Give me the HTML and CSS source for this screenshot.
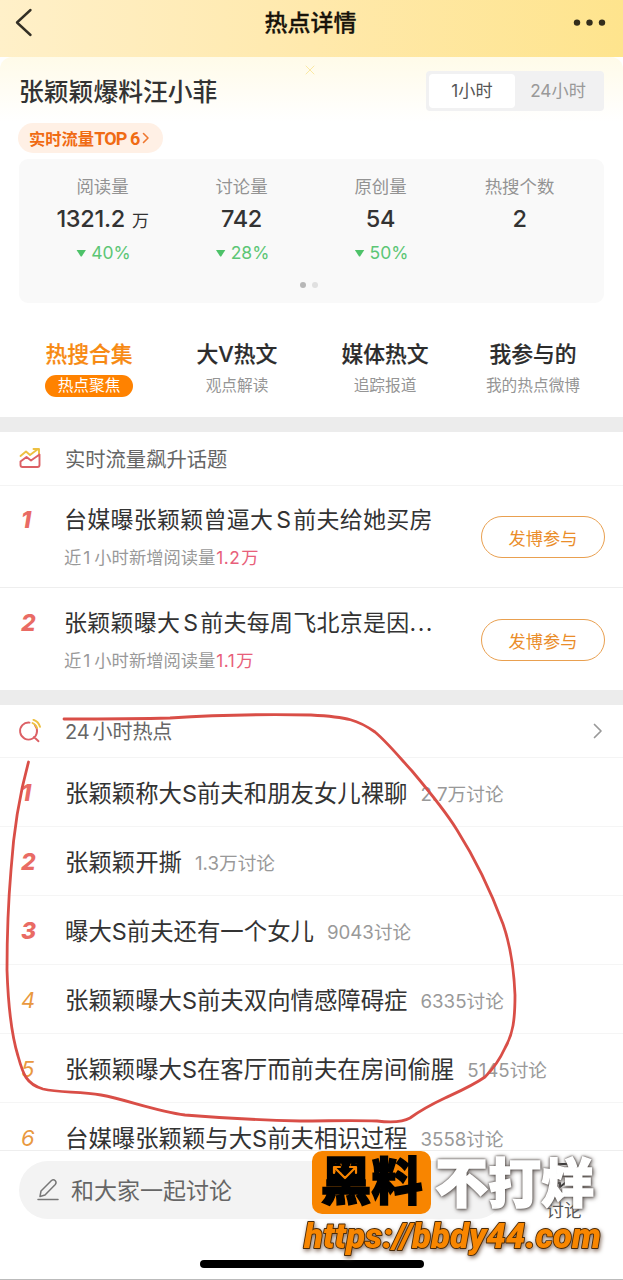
FILE: index.html
```html
<!DOCTYPE html>
<html lang="zh-CN">
<head>
<meta charset="utf-8">
<title>热点详情</title>
<link rel="stylesheet" href="styles.css">
</head>
<body>
<div class="screen">
  <header class="navbar">
    <svg class="back" width="20" height="30" viewBox="0 0 20 30"><path d="M16.500 2 3 14.500 16.500 27"/></svg>
    <h1 class="nav-title">热点详情</h1>
    <svg class="more" width="34" height="8" viewBox="0 0 34 8"><circle cx="4" cy="3.600" r="3.200"/><circle cx="16.500" cy="3.600" r="3.200"/><circle cx="29" cy="3.600" r="3.200"/></svg>
  </header>

  <section class="topic">
    <svg class="spark" width="12" height="12" viewBox="0 0 12 12"><path d="M2 2l8 8M10 2l-8 8"/></svg>
    <div class="topic-head">
      <h2 class="topic-title">张颖颖爆料汪小菲</h2>
      <div class="segment"><span class="seg seg-on">1小时</span><span class="seg">24小时</span></div>
    </div>
    <div class="rank-pill"><span>实时流量<span class="rank-num">TOP 6</span></span><svg width="8" height="12" viewBox="0 0 8 12"><path d="M1.500 1.500 6 6 1.500 10.500"/></svg></div>
    <div class="stats">
      <div class="stat-grid">
        <div class="stat"><span class="stat-label">阅读量</span><span class="stat-value">1321.2 <small>万</small></span><span class="stat-trend"><i class="tri"></i>40%</span></div>
        <div class="stat"><span class="stat-label">讨论量</span><span class="stat-value">742</span><span class="stat-trend"><i class="tri"></i>28%</span></div>
        <div class="stat"><span class="stat-label">原创量</span><span class="stat-value">54</span><span class="stat-trend"><i class="tri"></i>50%</span></div>
        <div class="stat"><span class="stat-label">热搜个数</span><span class="stat-value">2</span></div>
      </div>
      <div class="dots"><i class="dot dot-on"></i><i class="dot"></i></div>
    </div>
  </section>

  <nav class="tabs">
    <div class="tab tab-on"><span class="tab-name">热搜合集</span><span class="tab-sub">热点聚焦</span></div>
    <div class="tab"><span class="tab-name">大V热文</span><span class="tab-sub">观点解读</span></div>
    <div class="tab"><span class="tab-name">媒体热文</span><span class="tab-sub">追踪报道</span></div>
    <div class="tab"><span class="tab-name">我参与的</span><span class="tab-sub">我的热点微博</span></div>
  </nav>

  <section class="block">
    <div class="block-head">
      <svg class="head-icon" width="24" height="24" viewBox="0 0 24 24"><path class="gold" d="M2.500 9 8 4.500l4 3.500 8-6M15.500 2H21v5"/><path class="rose" d="M2.500 14.500 8.500 10l4.500 3.500L21.500 7.500V18q0 2-2 2H4.500q-2 0-2-2z"/></svg>
      <span class="head-text">实时流量飙升话题</span>
    </div>
    <div class="rise">
      <span class="no no-top">1</span>
      <div class="rise-body"><p class="rise-title">台媒曝张颖颖曾逼大<span class="latin">S</span>前夫给她买房</p><p class="rise-note">近<span class="one">1</span>小时新增阅读量<em>1.2<b>万</b></em></p></div>
      <span class="join">发博参与</span>
    </div>
    <div class="rise">
      <span class="no no-top">2</span>
      <div class="rise-body"><p class="rise-title">张颖颖曝大<span class="latin">S</span>前夫每周飞北京是因<span class="ellipsis">...</span></p><p class="rise-note">近<span class="one">1</span>小时新增阅读量<em>1.1<b>万</b></em></p></div>
      <span class="join">发博参与</span>
    </div>
  </section>

  <section class="block hot">
    <div class="block-head">
      <svg class="head-icon" width="24" height="24" viewBox="0 0 24 24"><path class="rose" d="M11.500 3.600A8.500 8.500 0 1 0 17 6.500Q20 10 18.500 14.500M16 18l4.500 4.200"/><path class="gold" d="M14.500 4q3.500 1.500 4.500 5M15.500.8q5 1.700 6.500 7"/></svg>
      <span class="hours head-text">24<span>小时热点</span></span>
      <svg class="chevron" width="10" height="16" viewBox="0 0 10 16"><path d="M1.500 1.500 8 8l-6.500 6.500"/></svg>
    </div>
    <div class="hot-row"><span class="no no-top">1</span><span class="hot-title">张颖颖称大S前夫和朋友女儿裸聊</span><span class="hot-count">2.7万讨论</span></div>
    <div class="hot-row"><span class="no no-top">2</span><span class="hot-title">张颖颖开撕</span><span class="hot-count">1.3万讨论</span></div>
    <div class="hot-row"><span class="no no-top">3</span><span class="hot-title">曝大S前夫还有一个女儿</span><span class="hot-count">9043讨论</span></div>
    <div class="hot-row"><span class="no">4</span><span class="hot-title">张颖颖曝大S前夫双向情感障碍症</span><span class="hot-count">6335讨论</span></div>
    <div class="hot-row"><span class="no">5</span><span class="hot-title">张颖颖曝大S在客厅而前夫在房间偷腥</span><span class="hot-count">5145讨论</span></div>
    <div class="hot-row hot-last"><span class="no">6</span><span class="hot-title">台媒曝张颖颖与大S前夫相识过程</span><span class="hot-count">3558讨论</span></div>
  </section>

  <footer class="compose">
    <div class="compose-row">
      <div class="field"><svg width="22" height="24" viewBox="0 0 22 24"><path d="M3 18.500 4 13 14.500 2.500q2-1.500 3.800.3 1.500 1.800 0 3.700L8 17zM1 21.500h20"/></svg><span>和大家一起讨论</span></div>
      <div class="talk"><svg width="28" height="28" viewBox="0 0 28 28"><path d="M3 3h22v19H15l-5 4v-4H3zM8 9h12M8 15h12"/></svg><span>讨论</span></div>
    </div>
    <div class="home-bar"></div>
  </footer>

  <svg class="scribble" width="623" height="1280" viewBox="0 0 623 1280"><path d="M64 719C110 719 135 719 170 718C215 715 260 714 311 715C348 717 358 720 375 732C388 743 400 758 412 771C428 790 446 812 457 830C476 860 490 889 503 924C510 944 514 970 515 995C515 1020 513 1034 505 1048C500 1059 494 1068 485 1077C472 1086 458 1092 445 1098C428 1106 421 1110 410 1118C403 1122 390 1122.500 377 1121C350 1120 330 1121 300 1121C260 1120 220 1118 185 1115C155 1111 128 1100 101 1095C80 1091 60 1093 43 1089C26 1084 23 1074 18 1056C10 1030 8 1000 7 970C7 935 8 905 11 870C13 840 18 800 28.500 762"/></svg>

  <div class="stamp">
    <div class="stamp-top">
      <span class="stamp-box">黑料</span>
      <span class="stamp-white">不打烊</span>
      <svg class="stamp-arrows" width="28" height="18" viewBox="0 0 28 18"><path d="M4 4 14 14 24 4M3 9V3h6M19 3h6v6"/></svg>
    </div>
    <svg class="stamp-url" width="320" height="46" viewBox="0 0 320 46"><text x="14" y="34" textLength="297" lengthAdjust="spacingAndGlyphs">https://bbdy44.com</text></svg>
  </div>
</div>
</body>
</html>
```
FILE: styles.css
```css
* { box-sizing: border-box; }
body {
  margin: 0;
  background: #fff;
  color: #333;
  font-family: "Inter", "Noto Sans CJK SC", sans-serif;
}
h1, h2, p { margin: 0; font-weight: 400; }
em, i, b { font-style: normal; font-weight: 400; }
svg { display: block; flex: none; fill: none; stroke-linecap: round; stroke-linejoin: round; }
.screen {
  position: relative;
  display: flex;
  flex-direction: column;
  width: 623px;
  height: 1280px;
  overflow: hidden;
  white-space: nowrap;
}

.navbar {
  display: grid;
  grid-template-columns: 1fr auto 1fr;
  align-items: center;
  height: 57px;
  flex: none;
  padding: 0 16px 11px 14px;
  background: linear-gradient(90deg, #fff0c9, #ffe9ac 50%, #fee48d);
}
.back { stroke: #332f25; stroke-width: 2.400; }
.nav-title { font-size: 23px; font-weight: 500; line-height: 30px; color: #17130a; -webkit-text-stroke: .3px #17130a; }
.more { justify-self: end; fill: #332d1c; }

.topic {
  position: relative;
  height: 246px;
  flex: none;
  padding: 13px 19px 0;
  border-radius: 12px 12px 0 0;
  background: linear-gradient(180deg, #fffbe9, #fff 65px);
}
.spark { position: absolute; left: 304px; top: 7px; stroke: #fae9a4; stroke-width: 1; }
.topic-head { display: flex; justify-content: space-between; height: 53px; }
.topic-title { font-size: 24.800px; line-height: 44px; font-weight: 500; }
.segment {
  display: flex;
  width: 178px;
  height: 40px;
  margin-top: 1px;
  padding: 3px;
  border-radius: 4px;
  background: #f1f1f2;
}
.seg { width: 86px; line-height: 34px; text-align: center; font-size: 17.200px; color: #999; }
.seg-on { border-radius: 4px; background: #fff; color: #555; }
.rank-pill {
  display: flex;
  align-items: center;
  gap: 3px;
  width: 145px;
  height: 30px;
  margin-left: -1px;
  padding-left: 11px;
  border-radius: 15px;
  background: #fff0e5;
  color: #f06b13;
  font-size: 16.300px;
  font-weight: 700;
}
.rank-num { font-family: Roboto, sans-serif; font-size: 18px; letter-spacing: -.9px; }
.rank-pill svg { stroke: #ef7830; stroke-width: 1.600; }
.stats {
  height: 144px;
  margin-top: 6px;
  padding: 16px 15px 0 14px;
  border-radius: 9px;
  background: #f9f9f9;
}
.stat-grid { display: grid; grid-template-columns: repeat(4, 1fr); height: 107px; }
.stat { display: flex; flex-direction: column; align-items: center; }
.stat-label { font-size: 17.400px; line-height: 24px; color: #939393; }
.stat-value { height: 41px; font-size: 23.500px; font-weight: 500; line-height: 40px; letter-spacing: -.3px; }
.stat-value small { margin-left: 1px; font-size: 17px; font-weight: 400; line-height: 20px; }
.stat-trend { display: flex; align-items: center; gap: 5px; margin-left: 2px; font-size: 17.500px; line-height: 26px; color: #5cc675; }
.tri { width: 10px; height: 7px; background: #4dc269; clip-path: polygon(0 0, 100% 0, 55% 100%, 45% 100%); }
.dots { display: flex; justify-content: center; gap: 6px; margin-left: -5px; }
.dot { width: 6px; height: 6px; border-radius: 50%; background: #e0e0e0; }
.dot-on { background: #b7b7b7; }

.tabs {
  display: grid;
  grid-template-columns: repeat(4, 148px);
  height: 114px;
  flex: none;
  padding: 35px 0 0 15px;
}
.tab { display: flex; flex-direction: column; align-items: center; }
.tab-name { font-size: 21.800px; line-height: 32px; font-weight: 500; color: #2c2c2c; -webkit-text-stroke: .2px currentColor; }
.tab-sub { margin-top: 5px; font-size: 15.700px; line-height: 22px; color: #959595; }
.tab-on .tab-name { color: #f78a13; }
.tab-on .tab-sub { width: 88px; border-radius: 11px; background: #ff8200; color: #fff; text-align: center; }

.block { flex: none; border-top: 15px solid #ececec; }
.block-head {
  display: flex;
  align-items: center;
  height: 54px;
  padding: 0 20px 0 18px;
  border-bottom: 1px solid #f4f4f4;
  font-size: 20.300px;
  color: #666;
}
.head-text { margin-bottom: 2px; }
.head-icon { margin-right: 23px; stroke-width: 1.900; }
.gold { stroke: #edc042; }
.rose { stroke: #dc6065; }
.hours { flex: 1; margin-bottom: 1px; font-size: 20px; letter-spacing: -.1px; }
.hours span { margin-left: 3px; }
.chevron { stroke: #999; stroke-width: 1.700; }
.no {
  flex: none;
  width: 43px;
  font-size: 22px;
  font-style: italic;
  line-height: 30px;
  color: #e9993f;
}
.no-top { font-weight: 800; color: #e96b64; font-size: 23px; }
.rise {
  display: flex;
  height: 102px;
  padding: 19px 18px 0 21px;
  border-bottom: 1px solid #eee;
}
.rise:last-child { height: 102px; padding-top: 20px; border-bottom: 0; }
.rise-body { flex: 1; }
.rise-title { font-size: 23px; line-height: 30px; letter-spacing: .25px; }
.latin { margin: 0 2px 0 3px; }
.ellipsis { letter-spacing: 1.500px; }
.rise-note { margin-top: 11px; font-size: 17.300px; line-height: 24px; color: #999; }
.one { margin: 0 4px 0 2px; }
.rise-note em { margin-left: 1px; color: #e8607a; letter-spacing: .5px; }
.rise-note b { margin-left: 1px; }
.join {
  width: 124px;
  height: 42px;
  margin-top: 11px;
  border: 1.500px solid #e9a050;
  border-radius: 21px;
  color: #ea8d2a;
  font-size: 17.200px;
  line-height: 43px;
  text-align: center;
}

.hot { border-top-width: 15px; height: 460px; }
.hot .block-head { height: 53px; }
.hot-row {
  display: flex;
  align-items: center;
  height: 69px;
  padding: 0 0 1px 21px;
  border-bottom: 1px solid #f5f5f5;
}
.hot-last { border-bottom: 0; }
.hot-row .no { margin-top: 2px; width: 44px; }
.hot-title { font-size: 23.400px; }
.hot-count { margin: 1px 0 0 13px; font-size: 18.700px; color: #999; }

.compose {
  position: relative;
  display: flex;
  flex-direction: column;
  flex: none;
  height: 130px;
  padding: 10px 19px 0;
  border-top: 1px solid #eee;
  border-bottom: 1px solid #bbb;
  background: #fff;
}
.compose-row { display: flex; height: 99px; }
.field {
  display: flex;
  align-items: center;
  gap: 12px;
  width: 486px;
  flex: none;
  height: 58px;
  padding-left: 18px;
  border-radius: 29px;
  background: #f3f3f3;
  color: #666;
  font-size: 23px;
}
.field span { margin-bottom: 2px; }
.field svg { stroke: #777; stroke-width: 1.500; }
.talk {
  display: flex;
  flex-direction: column;
  align-items: center;
  flex: none;
  width: 118px;
  font-size: 18px;
  line-height: 24px;
  color: #555;
}
.talk svg { stroke: #333; stroke-width: 2; margin: 0 0 10px; }
.home-bar { width: 224px; height: 8px; margin-left: 181px; border-radius: 4px; background: #000; flex: none; }

.scribble { position: absolute; inset: 0; stroke: #d94e47; stroke-width: 2.800; }

.stamp { position: absolute; left: 290px; top: 1151px; width: 333px; }
.stamp-top { position: relative; display: flex; align-items: center; height: 63px; padding-left: 22px; }
.stamp-box {
  width: 119px;
  height: 63px;
  border-radius: 10px;
  background: #f88500;
  color: #000;
  font-size: 51px;
  font-weight: 900;
  line-height: 61px;
  text-align: center;
  -webkit-text-stroke: 1.500px #000;
}
.stamp-arrows { position: absolute; left: 41px; top: 13px; stroke: #f88500; stroke-width: 2.200; }
.stamp-white {
  margin: 4px 0 0 4px;
  font-size: 53px;
  font-weight: 900;
  line-height: 63px;
  color: #fff;
  -webkit-text-stroke: 1.500px #fff;
  filter: drop-shadow(0 0 1px #4a4441) drop-shadow(1px 1px 2px #6e6764);
}
.stamp-url { overflow: visible; filter: drop-shadow(1px 2px 2px #8a7568); }
.stamp-url text {
  font-family: Roboto, sans-serif;
  font-size: 35.500px;
  font-weight: 900;
  font-style: italic;
  fill: #f88600;
  stroke: #4a2a08;
  stroke-width: 1.800;
  paint-order: stroke;
}
```
